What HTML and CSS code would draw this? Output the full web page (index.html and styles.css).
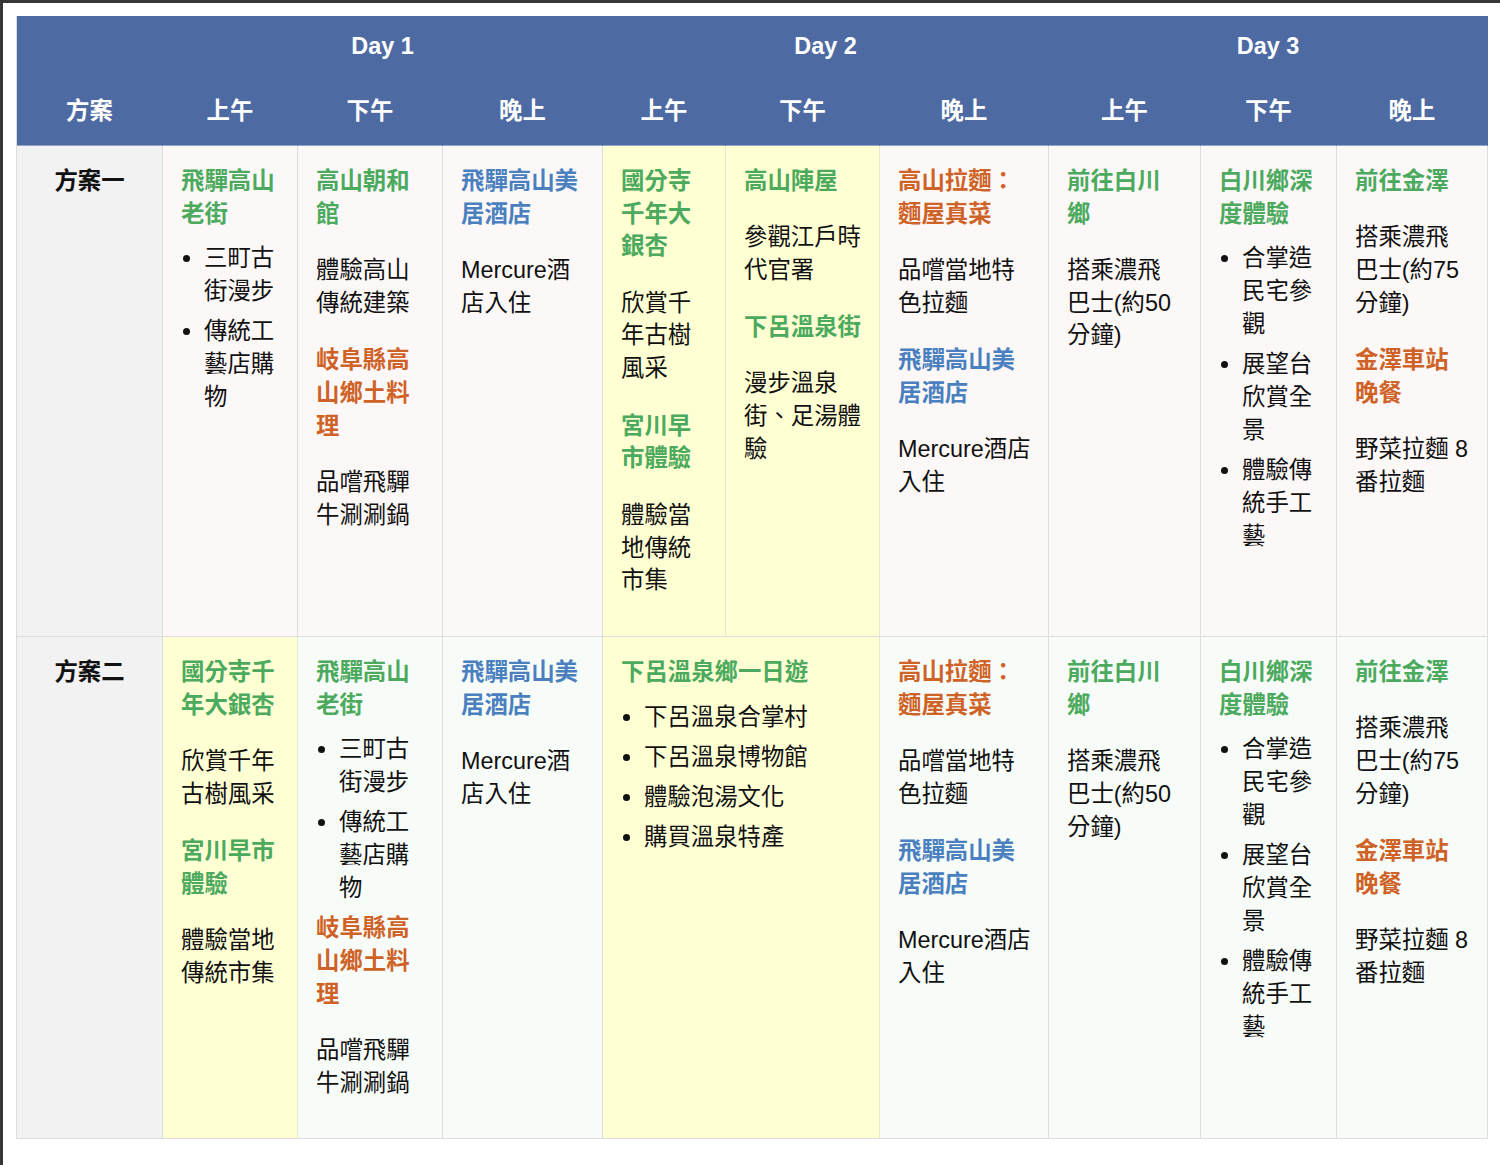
FILE: index.html
```html
<!DOCTYPE html>
<html lang="zh-Hant">
<head>
<meta charset="utf-8">
<title>高山・白川鄉・金澤 三日行程方案</title>
<link rel="stylesheet" href="styles.css">
</head>
<body>
<div class="page">
  <div class="plan-table">
    <div class="hd hd-day"></div>
    <div class="hd hd-day span3">Day 1</div>
    <div class="hd hd-day span3">Day 2</div>
    <div class="hd hd-day span3">Day 3</div>

    <div class="hd hd-sub">方案</div>
    <div class="hd hd-sub">上午</div>
    <div class="hd hd-sub">下午</div>
    <div class="hd hd-sub">晚上</div>
    <div class="hd hd-sub">上午</div>
    <div class="hd hd-sub">下午</div>
    <div class="hd hd-sub">晚上</div>
    <div class="hd hd-sub">上午</div>
    <div class="hd hd-sub">下午</div>
    <div class="hd hd-sub">晚上</div>

    <!-- 方案一 -->
    <div class="cell plan">方案一</div>
    <div class="cell r1">
      <div class="t green">飛驒高山老街</div>
      <ul><li>三町古街漫步</li><li>傳統工藝店購物</li></ul>
    </div>
    <div class="cell r1">
      <div class="t green">高山朝和館</div>
      <p>體驗高山傳統建築</p>
      <div class="t orange">岐阜縣高山鄉土料理</div>
      <p>品嚐飛驒牛涮涮鍋</p>
    </div>
    <div class="cell r1">
      <div class="t blue">飛驒高山美居酒店</div>
      <p>Mercure酒店入住</p>
    </div>
    <div class="cell hl">
      <div class="t green">國分寺千年大銀杏</div>
      <p>欣賞千年古樹風采</p>
      <div class="t green">宮川早市體驗</div>
      <p>體驗當地傳統市集</p>
    </div>
    <div class="cell hl">
      <div class="t green">高山陣屋</div>
      <p>參觀江戶時代官署</p>
      <div class="t green">下呂溫泉街</div>
      <p>漫步溫泉街、足湯體驗</p>
    </div>
    <div class="cell r1">
      <div class="t orange">高山拉麵：麵屋真菜</div>
      <p>品嚐當地特色拉麵</p>
      <div class="t blue">飛驒高山美居酒店</div>
      <p>Mercure酒店入住</p>
    </div>
    <div class="cell r1">
      <div class="t green">前往白川鄉</div>
      <p>搭乘濃飛巴士(約50分鐘)</p>
    </div>
    <div class="cell r1">
      <div class="t green">白川鄉深度體驗</div>
      <ul><li>合掌造民宅參觀</li><li>展望台欣賞全景</li><li>體驗傳統手工藝</li></ul>
    </div>
    <div class="cell r1">
      <div class="t green">前往金澤</div>
      <p>搭乘濃飛巴士(約75分鐘)</p>
      <div class="t orange">金澤車站晚餐</div>
      <p>野菜拉麵 8番拉麵</p>
    </div>

    <!-- 方案二 -->
    <div class="cell plan">方案二</div>
    <div class="cell hl">
      <div class="t green">國分寺千年大銀杏</div>
      <p>欣賞千年古樹風采</p>
      <div class="t green">宮川早市體驗</div>
      <p>體驗當地傳統市集</p>
    </div>
    <div class="cell r2">
      <div class="t green">飛驒高山老街</div>
      <ul><li>三町古街漫步</li><li>傳統工藝店購物</li></ul>
      <div class="t orange">岐阜縣高山鄉土料理</div>
      <p>品嚐飛驒牛涮涮鍋</p>
    </div>
    <div class="cell r2">
      <div class="t blue">飛驒高山美居酒店</div>
      <p>Mercure酒店入住</p>
    </div>
    <div class="cell hl span2">
      <div class="t green">下呂溫泉鄉一日遊</div>
      <ul><li>下呂溫泉合掌村</li><li>下呂溫泉博物館</li><li>體驗泡湯文化</li><li>購買溫泉特產</li></ul>
    </div>
    <div class="cell r2">
      <div class="t orange">高山拉麵：麵屋真菜</div>
      <p>品嚐當地特色拉麵</p>
      <div class="t blue">飛驒高山美居酒店</div>
      <p>Mercure酒店入住</p>
    </div>
    <div class="cell r2">
      <div class="t green">前往白川鄉</div>
      <p>搭乘濃飛巴士(約50分鐘)</p>
    </div>
    <div class="cell r2">
      <div class="t green">白川鄉深度體驗</div>
      <ul><li>合掌造民宅參觀</li><li>展望台欣賞全景</li><li>體驗傳統手工藝</li></ul>
    </div>
    <div class="cell r2">
      <div class="t green">前往金澤</div>
      <p>搭乘濃飛巴士(約75分鐘)</p>
      <div class="t orange">金澤車站晚餐</div>
      <p>野菜拉麵 8番拉麵</p>
    </div>
  </div>
</div>
</body>
</html>
```

FILE: styles.css
```css
html {
  background: #363636;
}

body {
  margin: 3px 0 0 3px;
  background: #ffffff;
  min-height: calc(100vh - 3px);
  font-family: "Liberation Sans", "Noto Sans CJK TC", sans-serif;
  font-size: 23.4px;
  line-height: 32.85px;
  color: #111;
}

.page {
  padding: 13px 0 0 13px;
}

.plan-table {
  display: grid;
  grid-template-columns: 146px 135px 145px 160px 123px 154px 169px 152px 136px 151px;
  width: 1471px;
  border-left: 1px solid #dcdcdc;
}

.span3 {
  grid-column: span 3;
}

.span2 {
  grid-column: span 2;
}

.hd {
  background: #4e6aa3;
  color: #fff;
  font-weight: bold;
  text-align: center;
  border-right: 1px solid #4e6aa3;
}

.hd-day {
  padding: 14px 0 18px;
}

.hd-sub {
  padding: 14px 0 17px;
  border-bottom: 1px solid #93a4c9;
}

.cell {
  padding: 19px 17px 14px 18px;
  border-right: 1px solid #dedede;
  border-bottom: 1px solid #dedede;
}

.plan {
  background: #f2f2f2;
  font-weight: bold;
  text-align: center;
  color: #111;
  padding-left: 0;
  padding-right: 0;
}

.r1 {
  background: #fdf8f8;
}

.r2 {
  background: #f8fcf8;
}

.hl {
  background: #ffffd4;
  border-right-color: #e8e8d0;
}

.t {
  font-weight: bold;
  margin: 0 0 12px;
}

.green {
  color: #4caa5e;
}

.orange {
  color: #cf6226;
}

.blue {
  color: #4a80bf;
}

.cell p {
  margin: 23.4px 0 24.5px;
}

.cell ul {
  list-style: none;
  margin: 0;
  padding: 0;
}

.cell li {
  display: flex;
  margin: 0 0 7.3px;
}

.cell li::before {
  content: "";
  flex: none;
  width: 7px;
  height: 7px;
  border-radius: 50%;
  background: #111;
  margin: 13px 14px 0 2px;
}
```
